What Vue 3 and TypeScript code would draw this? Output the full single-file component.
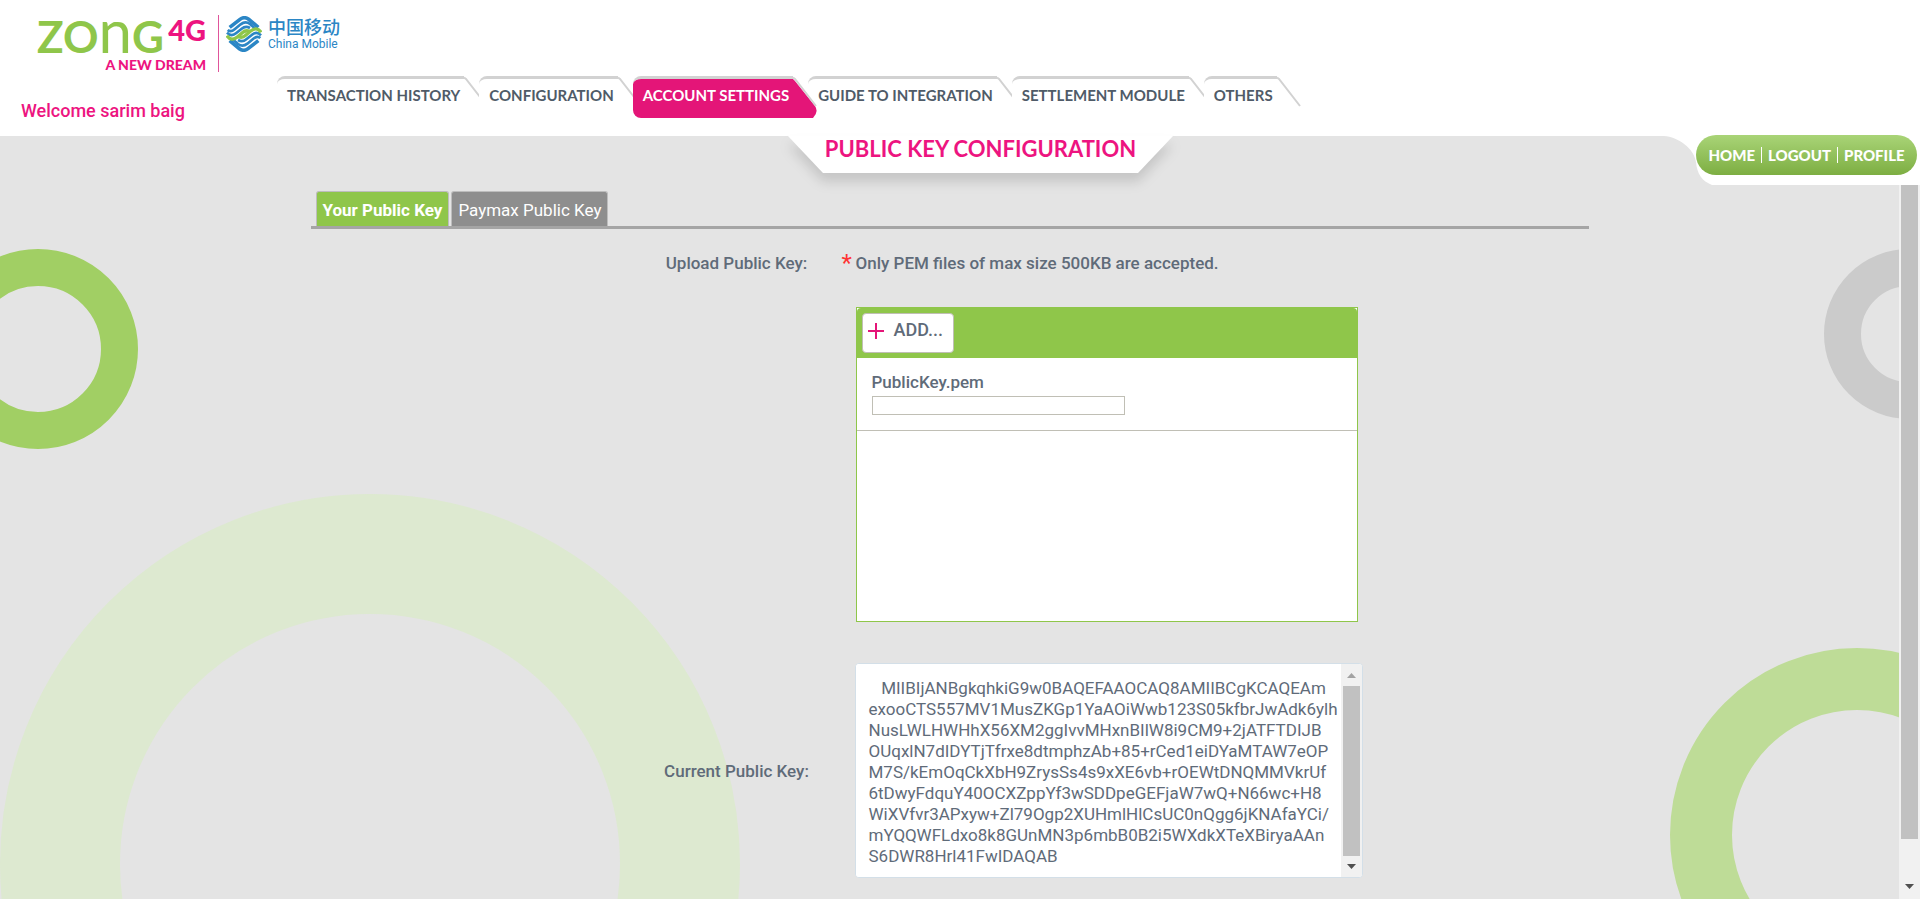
<script setup lang="ts">
import { ref } from 'vue'

interface NavItem {
  label: string
  active?: boolean
}

const navItems: NavItem[] = [
  { label: 'TRANSACTION HISTORY' },
  { label: 'CONFIGURATION' },
  { label: 'ACCOUNT SETTINGS', active: true },
  { label: 'GUIDE TO INTEGRATION' },
  { label: 'SETTLEMENT MODULE' },
  { label: 'OTHERS' },
]

const tabs = ['Your Public Key', 'Paymax Public Key']
const activeTab = ref(0)

const publicKey = ref(
  [
    '   MIIBIjANBgkqhkiG9w0BAQEFAAOCAQ8AMIIBCgKCAQEAm',
    'exooCTS557MV1MusZKGp1YaAOiWwb123S05kfbrJwAdk6ylh',
    'NusLWLHWHhX56XM2ggIvvMHxnBIlW8i9CM9+2jATFTDIJB',
    'OUqxlN7dIDYTjTfrxe8dtmphzAb+85+rCed1eiDYaMTAW7eOP',
    'M7S/kEmOqCkXbH9ZrysSs4s9xXE6vb+rOEWtDNQMMVkrUf',
    '6tDwyFdquY40OCXZppYf3wSDDpeGEFjaW7wQ+N66wc+H8',
    'WiXVfvr3APxyw+Zl79Ogp2XUHmlHlCsUC0nQgg6jKNAfaYCi/',
    'mYQQWFLdxo8k8GUnMN3p6mbB0B2i5WXdkXTeXBiryaAAn',
    'S6DWR8Hrl41FwIDAQAB',
  ].join('\n'),
)
</script>

<template>
  <div class="page">
    <header class="header">
      <div class="brand">
        <div class="logo">
          <div class="zong">
            <div class="zong-row">
              <span class="zong-name">ZO<span class="zong-arch">n</span>G</span><span class="zong-4g">4G</span>
            </div>
            <div class="zong-tag">A NEW DREAM</div>
          </div>
          <svg class="emblem" viewBox="0 0 108 108" aria-hidden="true">
            <g fill="none" stroke="#2b86c5">
              <path d="M11 34 L42 10 Q54 1 67 9 L97 34" stroke-width="11" />
              <path d="M5 42 Q14 50 26 40 L44 25 Q58 14 72 24 L90 40" stroke-width="8" />
              <path d="M3 50 Q16 64 31 51 L47 38 Q59 28 72 36" stroke-width="8" />
              <path d="M97 74 L66 98 Q54 107 41 99 L11 74" stroke-width="11" />
              <path d="M103 66 Q94 58 82 68 L64 83 Q50 94 36 84 L18 68" stroke-width="8" />
              <path d="M105 58 Q92 44 77 57 L61 70 Q49 80 36 72" stroke-width="8" />
            </g>
            <g fill="none" stroke="#8fc64a" stroke-width="10">
              <path d="M3 59 Q16 78 34 63 L49 50 Q59 41 70 46" />
              <path d="M105 49 Q92 30 74 45 L59 58 Q49 67 38 62" />
            </g>
          </svg>
          <div class="mobile">
            <span class="mobile-cn" lang="zh">中国移动</span>
            <span class="mobile-en">China Mobile</span>
          </div>
        </div>
        <div class="welcome">Welcome sarim baig</div>
      </div>

      <nav class="nav" aria-label="Main">
        <a v-for="item in navItems" :key="item.label" href="#" class="nav-tab" :class="{ active: item.active }">
          {{ item.label }}
          <svg class="slope" width="24" height="42" viewBox="0 0 24 42" aria-hidden="true">
            <path v-if="item.active" d="M0 3 L2 5 L22 30 Q26 36 20 42 L0 42 Z" fill="#e41578" />
            <path v-else d="M0 3 L24 32 L24 42 L0 42 Z" fill="#fff" />
            <path d="M0 1.5 L2 3 L23 30" fill="none" stroke="#d2d2d2" stroke-width="2" />
          </svg>
        </a>
      </nav>
    </header>

    <main class="main">
      <div class="decor" aria-hidden="true">
        <div class="ring ring-small"></div>
        <div class="ring ring-large"></div>
        <div class="ring ring-grey"></div>
        <div class="ring ring-right"></div>
      </div>

      <div class="band">
        <div class="title">
          <svg class="title-bg" viewBox="0 0 385 60" preserveAspectRatio="none" aria-hidden="true">
            <path d="M0 0 H385 L350 37 H35 Z" fill="#fff" />
          </svg>
          <h1>PUBLIC KEY CONFIGURATION</h1>
        </div>
        <div class="user">
          <svg class="user-curve" viewBox="0 0 48 49" width="48" height="49" aria-hidden="true">
            <path d="M0 0 C14 1 30 12 32 26 C33 38 38 45 48 49 V0 Z" fill="#fff" />
          </svg>
          <div class="user-fill">
            <nav class="pill" aria-label="Account">
              <a href="#">HOME</a><a href="#">LOGOUT</a><a href="#">PROFILE</a>
            </nav>
          </div>
        </div>
      </div>

      <div class="body">
        <div class="content">
          <section class="panel">
            <div class="tabs" role="tablist">
              <button
                v-for="(tab, i) in tabs"
                :key="tab"
                type="button"
                role="tab"
                class="tab"
                :class="{ selected: activeTab === i }"
                :aria-selected="activeTab === i"
                @click="activeTab = i"
              >
                {{ tab }}
              </button>
            </div>

            <div class="form">
              <div class="label">Upload Public Key:</div>
              <div class="note"><span class="star">*</span>Only PEM files of max size 500KB are accepted.</div>

              <div class="upload">
                <div class="toolbar">
                  <button type="button" class="add">
                    <svg width="16" height="16" viewBox="0 0 16 16" aria-hidden="true">
                      <path d="M8 0 V16 M0 8 H16" stroke="#e41578" stroke-width="2" />
                    </svg>
                    <span>ADD...</span>
                  </button>
                </div>
                <div class="file">
                  <div>PublicKey.pem</div>
                  <div class="progress" role="progressbar" aria-label="PublicKey.pem" aria-valuenow="0"></div>
                </div>
              </div>

              <label class="label current" for="current-key">Current Public Key:</label>
              <div class="key">
                <textarea id="current-key" v-model="publicKey" readonly spellcheck="false"></textarea>
                <div class="bar" aria-hidden="true">
                  <svg width="9" height="5" viewBox="0 0 9 5"><path d="M0 5 L4.5 0 L9 5 Z" fill="#a3a3a3" /></svg>
                  <div class="thumb"></div>
                  <svg width="9" height="5" viewBox="0 0 9 5"><path d="M0 0 L4.5 5 L9 0 Z" fill="#505050" /></svg>
                </div>
              </div>
            </div>
          </section>
        </div>
        <div class="page-bar" aria-hidden="true">
          <div class="thumb"></div>
          <svg width="9" height="5" viewBox="0 0 9 5"><path d="M0 0 L4.5 5 L9 0 Z" fill="#505050" /></svg>
        </div>
      </div>
    </main>
  </div>
</template>

<style>
html,
body {
  background: #fff;
}
</style>

<style scoped>
* {
  box-sizing: border-box;
}

.page {
  display: flex;
  flex-direction: column;
  height: 100vh;
  overflow: hidden;
  font-family: Roboto, "Liberation Sans", sans-serif;
  font-size: 17px;
  font-weight: 500;
  color: #5f6b79;
}

.header {
  display: flex;
  height: 136px;
  flex: none;
}

.brand {
  width: 277px;
  flex: none;
}

.logo {
  display: flex;
  padding: 15px 0 0 37px;
  height: 72px;
}

.zong {
  flex: none;
  width: 182px;
  height: 57px;
  padding-right: 12px;
  border-right: 1px solid #e0559b;
  font-family: Lato, sans-serif;
  white-space: nowrap;
}

.zong-row {
  display: flex;
  justify-content: space-between;
  height: 40px;
}

.zong-name {
  font-size: 44px;
  line-height: 40px;
  font-weight: 700;
  color: #8fc64a;
}

.zong-arch {
  font-size: 60px;
  line-height: 30px;
  font-weight: 400;
}

.zong-4g {
  font-size: 29px;
  line-height: 29px;
  font-weight: 900;
  color: #ed1480;
}

.zong-tag {
  font-size: 14px;
  line-height: 20px;
  font-weight: 900;
  text-align: right;
  color: #ed1480;
}

.emblem {
  flex: none;
  width: 36px;
  height: 36px;
  margin: 1px 6px 0 7px;
}

.mobile {
  display: flex;
  flex-direction: column;
  flex: none;
  color: #2b86c5;
  white-space: nowrap;
}

.mobile-cn {
  font-family: "Noto Sans CJK SC", sans-serif;
  font-size: 18px;
  line-height: 22px;
}

.mobile-en {
  font-size: 12px;
  line-height: 14px;
  font-weight: 400;
}

.welcome {
  padding: 26px 0 0 21px;
  font-size: 18px;
  line-height: 26px;
  font-weight: 500;
  color: #ed1480;
}

.nav {
  display: flex;
  padding-top: 76px;
}

.nav-tab {
  position: relative;
  height: 42px;
  margin-right: 15px;
  padding: 0 4px 0 10px;
  border-top: 3px solid #d2d2d2;
  border-radius: 8px 0 0 0;
  background: #fff;
  font-family: Lato, sans-serif;
  font-size: 15px;
  line-height: 32px;
  font-weight: 700;
  color: #4f5b68;
  text-decoration: none;
  white-space: nowrap;
}

.nav-tab.active {
  z-index: 1;
  border-radius: 8px 0 0 8px;
  background: #e41578;
  background-clip: padding-box;
  color: #fff;
}

.slope {
  position: absolute;
  left: 100%;
  top: -3px;
}

.main {
  position: relative;
  display: flex;
  flex-direction: column;
  flex: 1;
  min-height: 0;
  background: #e4e4e4;
}

.decor {
  position: absolute;
  inset: 0;
  overflow: hidden;
}

.ring {
  position: absolute;
  border-style: solid;
  border-radius: 50%;
}

.ring-small {
  left: -62px;
  top: 113px;
  width: 200px;
  height: 200px;
  border-width: 37px;
  border-color: #a1cf64;
}

.ring-large {
  left: 0;
  top: 358px;
  width: 740px;
  height: 740px;
  border-width: 120px;
  border-color: #dde9d0;
}

.ring-grey {
  right: -74px;
  top: 113px;
  width: 170px;
  height: 170px;
  border-width: 37px;
  border-color: #cbcbcb;
}

.ring-right {
  right: -124px;
  top: 512px;
  width: 374px;
  height: 374px;
  border-width: 62px;
  border-color: #bedc97;
}

.band {
  position: relative;
  display: flex;
  height: 49px;
  flex: none;
  justify-content: space-between;
  padding-left: 788px;
}

.title {
  position: relative;
  flex: none;
  width: 385px;
  height: 60px;
}

.title-bg {
  position: absolute;
  inset: 0;
  width: 100%;
  height: 100%;
  filter: drop-shadow(0 9px 6px rgba(0, 0, 0, 0.13));
}

h1 {
  position: relative;
  margin: 0;
  font-family: Lato, sans-serif;
  font-size: 22px;
  line-height: 26px;
  font-weight: 700;
  text-align: center;
  color: #ed1480;
  white-space: nowrap;
}

.user {
  display: flex;
}

.user-fill {
  width: 208px;
  background: #fff;
}

.user-curve {
  flex: none;
}

.pill {
  position: relative;
  display: flex;
  align-items: center;
  justify-content: center;
  width: 221px;
  height: 40px;
  margin: -1px 0 0 -16px;
  border-radius: 20px;
  background: linear-gradient(#a9d477, #7dae42);
}

.pill a {
  padding: 0 6px;
  font-family: Lato, sans-serif;
  font-size: 15px;
  line-height: 16px;
  font-weight: 900;
  color: #fff;
  text-decoration: none;
}

.pill a + a {
  border-left: 1px solid #fff;
}

.body {
  position: relative;
  display: flex;
  flex: 1;
  min-height: 0;
}

.content {
  flex: 1;
  padding-top: 6px;
}

.panel {
  max-width: 1278px;
  margin: 0 auto;
}

.tabs {
  display: flex;
  gap: 2px;
  padding-left: 5px;
  border-bottom: 3px solid #a5a5a5;
}

.tab {
  height: 35px;
  padding: 2px 6px 0;
  border: 1px solid #bdbdbd;
  border-bottom: 0;
  border-radius: 3px 3px 0 0;
  background: #8e8e8e;
  font-family: inherit;
  font-size: 17px;
  font-weight: 400;
  color: #fff;
}

.tab.selected {
  background: #8fc64a;
  font-weight: 700;
}

.form {
  display: grid;
  grid-template-columns: 501px 1fr;
  column-gap: 30px;
  padding-top: 22px;
}

.label {
  justify-self: end;
  width: 150px;
  line-height: 24px;
  text-align: center;
  white-space: nowrap;
}

.note {
  display: flex;
  line-height: 24px;
}

.star {
  width: 14px;
  font-size: 24px;
  font-weight: 400;
  color: #f33;
}

.upload {
  grid-column: 2;
  width: 502px;
  height: 315px;
  margin: 32px 0 0 14px;
  border: 1px solid #8fc64a;
  background: #fff;
}

.toolbar {
  height: 50px;
  padding: 5px;
  border-radius: 4px 4px 0 0;
  background: #8fc64a;
}

.add {
  display: flex;
  gap: 10px;
  width: 92px;
  height: 40px;
  padding: 9px 5px;
  border: 1px solid #c0bfb5;
  border-radius: 4px;
  background: #fff;
  font-family: inherit;
  font-size: 18px;
  line-height: 14px;
  font-weight: 500;
  color: #5f6b79;
}

.file {
  height: 73px;
  padding: 12px 15px;
  border-bottom: 1px solid #c0bfb5;
  line-height: 24px;
}

.progress {
  width: 253px;
  height: 19px;
  margin-top: 2px;
  border: 1px solid #c0bfb5;
}

.current {
  align-self: center;
  margin-top: 41px;
}

.key {
  display: flex;
  width: 508px;
  height: 215px;
  margin: 41px 0 0 13px;
  border: 1px solid #d3dfe8;
  border-radius: 4px;
  background: #fff;
  overflow: hidden;
}

textarea {
  flex: 1;
  padding: 14px 0 0 13px;
  border: 0;
  outline: 0;
  resize: none;
  overflow: hidden;
  background: #fff;
  font-family: inherit;
  font-size: 17px;
  line-height: 21px;
  font-weight: 400;
  color: #5f6b79;
  white-space: pre;
}

.bar,
.page-bar {
  display: flex;
  flex-direction: column;
  align-items: center;
  flex: none;
  width: 21px;
  background: #f1f1f1;
}

.bar {
  justify-content: space-between;
  padding: 9px 0 8px;
}

.thumb {
  width: 17px;
  background: #c1c1c1;
}

.bar .thumb {
  height: 170px;
}

.page-bar {
  justify-content: space-between;
  padding-bottom: 10px;
}

.page-bar .thumb {
  height: 654px;
}
</style>
